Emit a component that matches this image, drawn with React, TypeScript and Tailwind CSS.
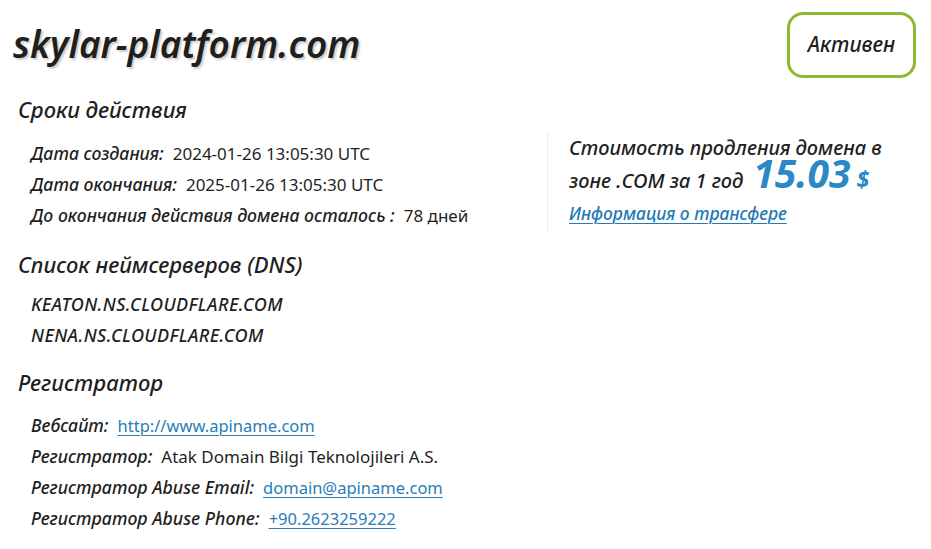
import React from "react";

const Label = ({ children }: { children: React.ReactNode }) => (
  <span className="italic font-medium text-[17.7px]">{children}</span>
);

const Row = ({ label, children }: { label: string; children: React.ReactNode }) => (
  <div className="h-[31px] leading-[31px] text-[17px] whitespace-nowrap">
    <Label>{label}</Label>
    <span className="ml-[9px]">{children}</span>
  </div>
);

const Link = ({ children }: { children: React.ReactNode }) => (
  <a href="#" className="text-[16.5px] text-[#2a7db8] underline underline-offset-[3px] decoration-1">
    {children}
  </a>
);

const Heading = ({ children }: { children: React.ReactNode }) => (
  <h2 className="pl-[18px] h-[28px] leading-[28px] text-[22px] italic font-medium whitespace-nowrap">
    {children}
  </h2>
);

export default function App() {
  return (
    <div className="w-[931px] h-[549px] bg-white text-[#1f1f1f] font-['Noto_Sans',sans-serif] overflow-hidden">
      <header className="flex justify-between items-start">
        <h1 className="pl-[13px] pt-[22px] h-[65px] leading-[44px] text-[37px] font-semibold italic [text-shadow:2px_2px_2px_#cfcfcf]">
          skylar-platform.com
        </h1>
        <div className="mt-[12px] mr-[15px] w-[129px] h-[66px] rounded-[16px] border-[3px] border-[#8cba2f] flex items-center justify-center text-[21px] italic font-medium">
          Активен
        </div>
      </header>

      <div className="mt-[17px]">
        <Heading>Сроки действия</Heading>
        <div className="flex items-start mt-[10px]">
          <div className="w-[547px] pl-[31px] pt-[5px]">
            <Row label="Дата создания:">2024-01-26 13:05:30 UTC</Row>
            <Row label="Дата окончания:">2025-01-26 13:05:30 UTC</Row>
            <Row label="До окончания действия домена осталось :">78 дней</Row>
          </div>
          <div className="h-[99px] border-l border-[#ececec] pl-[21px] text-[20px] italic font-medium whitespace-nowrap">
            <div className="h-[30px] leading-[30px]">Стоимость продления домена в</div>
            <div className="h-[36px] leading-[36px]">
              зоне .COM за 1 год
              <span className="leading-[0] text-[39px] font-bold text-[#2a88c6] ml-[10px]">15.03</span>
              <span className="leading-[0] text-[23px] font-bold text-[#2a88c6] ml-[6px]">$</span>
            </div>
            <div className="h-[28px] leading-[28px]">
              <a href="#" className="text-[17.4px] text-[#2479b4] underline underline-offset-[3px] decoration-1">
                Информация о трансфере
              </a>
            </div>
          </div>
        </div>
      </div>

      <div className="mt-[18px]">
        <Heading>Список неймсерверов (DNS)</Heading>
        <div className="pl-[31px] mt-[11px] text-[18px] tracking-[0.4px] italic font-medium">
          <div className="h-[31px] leading-[31px]">KEATON.NS.CLOUDFLARE.COM</div>
          <div className="h-[31px] leading-[31px]">NENA.NS.CLOUDFLARE.COM</div>
        </div>
      </div>

      <div className="mt-[17px]">
        <Heading>Регистратор</Heading>
        <div className="pl-[31px] mt-[14px]">
          <Row label="Вебсайт:">
            <Link>http://www.apiname.com</Link>
          </Row>
          <Row label="Регистратор:">Atak Domain Bilgi Teknolojileri A.S.</Row>
          <Row label="Регистратор Abuse Email:">
            <Link>domain@apiname.com</Link>
          </Row>
          <Row label="Регистратор Abuse Phone:">
            <Link>+90.2623259222</Link>
          </Row>
        </div>
      </div>
    </div>
  );
}
